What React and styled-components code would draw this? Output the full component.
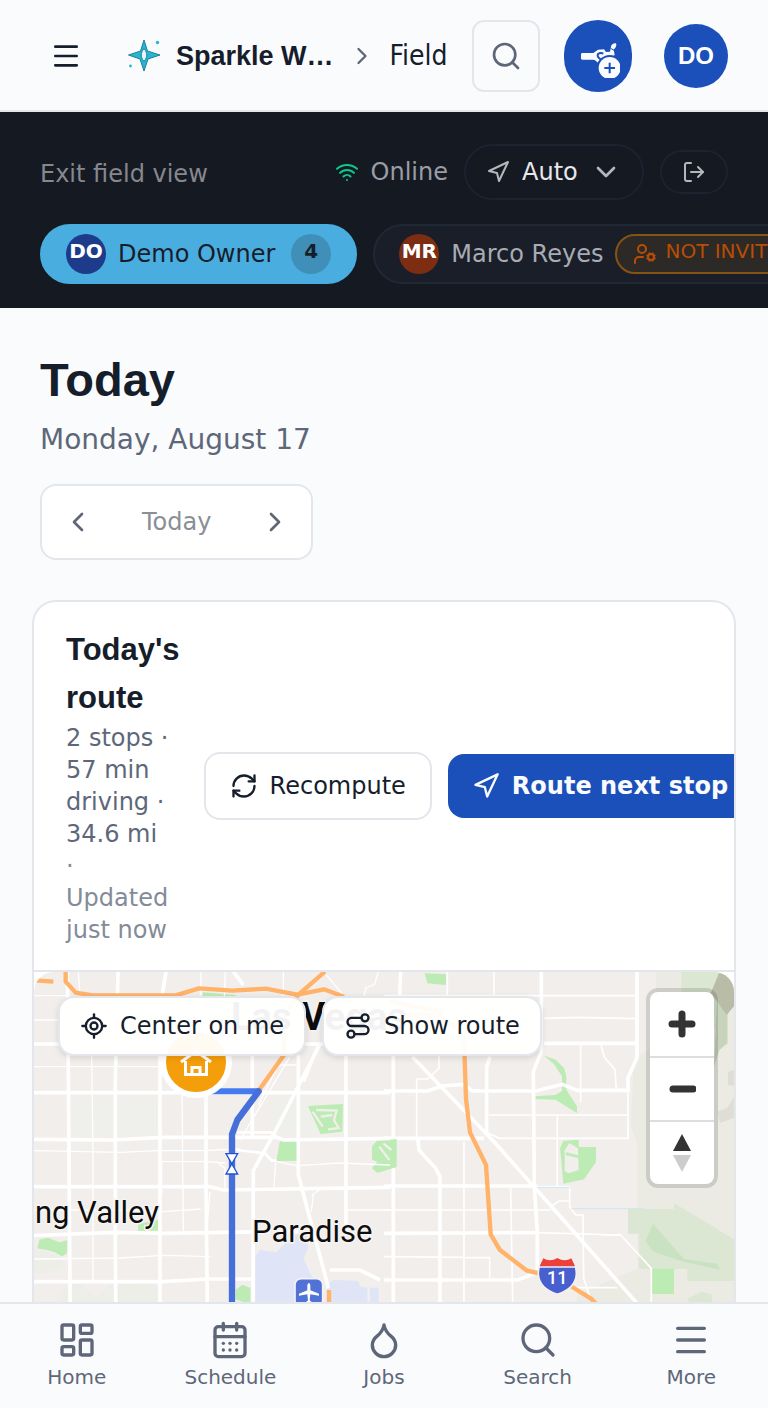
import styled, { ThemeProvider, createGlobalStyle } from "styled-components";
import {
  CalendarDays,
  ChevronDown,
  ChevronLeft,
  ChevronRight,
  Droplet,
  LayoutDashboard,
  LocateFixed,
  LogOut,
  Menu,
  Navigation,
  RefreshCw,
  Route,
  Search,
  UserCog,
  Wifi,
} from "lucide-react";

const theme = {
  colors: {
    page: "#fafbfd",
    card: "#ffffff",
    border: "#e3e6eb",
    text: "#161d2b",
    muted: "#5e6779",
    faint: "#848b98",
    blue: "#1b50ba",
    dark: "#151922",
  },
  fonts: {
    body: '"DejaVu Sans", sans-serif',
    heading: '"Liberation Sans", Arial, sans-serif',
    crumb: '"DejaVu Sans Condensed", "DejaVu Sans", sans-serif',
  },
};

const GlobalStyle = createGlobalStyle`
  * {
    box-sizing: border-box;
  }

  body {
    margin: 0;
    background: ${theme.colors.page};
    color: ${theme.colors.text};
    font-family: ${theme.fonts.body};
    font-size: 24px;
    line-height: 32px;
  }

  button,
  select {
    font: inherit;
    color: inherit;
    margin: 0;
    padding: 0;
    border: none;
    background: none;
    cursor: pointer;
  }

  h1,
  h2,
  p {
    margin: 0;
  }

  svg {
    display: block;
    flex: none;
  }
`;

const Shell = styled.div`
  display: flex;
  flex-direction: column;
  height: 100vh;
`;

const Header = styled.header`
  display: flex;
  align-items: center;
  gap: 24px;
  flex: none;
  height: 112px;
  padding: 2px 40px 0 32px;
  border-bottom: 2px solid ${(props) => props.theme.colors.border};
`;

const MenuButton = styled.button`
  display: flex;
  align-items: center;
  justify-content: center;
  flex: none;
  width: 68px;
  height: 72px;
`;

const Crumbs = styled.nav`
  display: flex;
  align-items: center;
  gap: 14px;
  flex: 1;
  min-width: 0;
  padding-left: 4px;
  overflow: hidden;
  white-space: nowrap;

  & > svg {
    color: ${(props) => props.theme.colors.muted};
  }
`;

const Brand = styled.a`
  display: flex;
  align-items: center;
  gap: 14px;
  flex: none;
  color: inherit;
  text-decoration: none;
  font-family: ${(props) => props.theme.fonts.heading};
  font-size: 27px;
  font-weight: 700;
`;

const CrumbCurrent = styled.span`
  font-family: ${(props) => props.theme.fonts.crumb};
  font-size: 28px;
`;

const SearchButton = styled.button`
  display: flex;
  align-items: center;
  justify-content: center;
  flex: none;
  width: 68px;
  height: 72px;
  border: 2px solid ${(props) => props.theme.colors.border};
  border-radius: 12px;
  color: ${(props) => props.theme.colors.muted};
`;

const AddJobButton = styled.button`
  display: flex;
  align-items: center;
  justify-content: center;
  flex: none;
  width: 68px;
  height: 72px;
  border-radius: 34px;
  background: ${(props) => props.theme.colors.blue};
`;

const AccountButton = styled.button`
  flex: none;
  width: 64px;
  height: 64px;
  margin-left: 8px;
  border-radius: 50%;
  background: ${(props) => props.theme.colors.blue};
  color: #fff;
  font-family: ${(props) => props.theme.fonts.heading};
  font-weight: 700;
`;

const FieldBar = styled.section`
  flex: none;
  padding: 32px 0 24px 40px;
  background: ${(props) => props.theme.colors.dark};
`;

const FieldTools = styled.div`
  display: flex;
  align-items: center;
  gap: 16px;
  margin-bottom: 24px;
  padding-right: 40px;
`;

const ExitButton = styled.button`
  margin-right: auto;
  padding-top: 4px;
  color: #86888e;
`;

const Status = styled.span`
  display: flex;
  align-items: center;
  gap: 12px;
  color: #9a9da5;

  & > svg {
    color: #0cc98b;
  }
`;

const ModeField = styled.label`
  display: flex;
  align-items: center;
  gap: 12px;
  height: 56px;
  padding: 0 20px;
  border: 2px solid #1c2230;
  border-radius: 28px;
  color: #b4b7be;
`;

const ModeSelect = styled.select`
  appearance: none;
  color: #e6e8ec;
`;

const LogOutButton = styled.button`
  display: flex;
  align-items: center;
  justify-content: center;
  width: 68px;
  height: 44px;
  border: 2px solid #1c2230;
  border-radius: 22px;
  color: #b4b7be;
`;

const ChipRow = styled.div`
  display: flex;
  gap: 16px;
  overflow: hidden;
`;

const Chip = styled.button`
  display: flex;
  align-items: center;
  gap: 12px;
  flex: none;
  height: 60px;
  padding: 0 24px;
  border: 2px solid ${(props) => (props.$active ? "#4aaddf" : "#212835")};
  border-radius: 30px;
  background: ${(props) => (props.$active ? "#4aaddf" : "#191e29")};
  color: ${(props) => (props.$active ? props.theme.colors.text : "#a9acb3")};
  white-space: nowrap;
`;

const ChipAvatar = styled.span`
  width: 40px;
  height: 40px;
  border-radius: 50%;
  background: ${(props) => props.$color};
  color: #fff;
  font-size: 20px;
  font-weight: 700;
  line-height: 34px;
  text-align: center;
`;

const ChipCount = styled.span`
  width: 40px;
  height: 40px;
  margin-left: 4px;
  border-radius: 50%;
  background: #408fb9;
  font-size: 20px;
  font-weight: 700;
  line-height: 34px;
  text-align: center;
`;

const InviteTag = styled.span`
  display: flex;
  align-items: center;
  gap: 8px;
  height: 40px;
  padding: 0 16px;
  border: 2px solid #855313;
  border-radius: 20px;
  background: #2d2926;
  color: #b94d04;
  font-size: 20px;

  & > span {
    height: 38px;
  }
`;

const Main = styled.main`
  flex: 1;
  min-height: 0;
  padding: 40px 32px;
  overflow-y: auto;
  scrollbar-width: none;
`;

const DayHeader = styled.div`
  padding: 0 8px;
`;

const PageTitle = styled.h1`
  font-family: ${(props) => props.theme.fonts.heading};
  font-size: 47px;
  line-height: 64px;
`;

const PageDate = styled.p`
  margin-bottom: 20px;
  padding-top: 4px;
  color: ${(props) => props.theme.colors.muted};
  font-size: 28px;
  line-height: 48px;
`;

const DayPicker = styled.div`
  display: inline-flex;
  align-items: center;
  height: 76px;
  margin-bottom: 40px;
  border: 2px solid ${(props) => props.theme.colors.border};
  border-radius: 16px;
  background: ${(props) => props.theme.colors.card};
  vertical-align: top;
`;

const DayStep = styled.button`
  display: flex;
  align-items: center;
  justify-content: center;
  width: 72px;
  height: 72px;
  color: ${(props) => props.theme.colors.muted};
`;

const DayCurrent = styled.button`
  padding: 0 28px;
  color: #8a8e95;
`;

const Card = styled.section`
  border: 2px solid ${(props) => props.theme.colors.border};
  border-radius: 24px;
  background: ${(props) => props.theme.colors.card};
  overflow: hidden;
`;

const CardHeader = styled.div`
  display: flex;
  align-items: center;
  gap: 24px;
  padding: 24px 32px;
  border-bottom: 2px solid ${(props) => props.theme.colors.border};
`;

const RouteSummary = styled.div`
  flex: 1;
  color: ${(props) => props.theme.colors.muted};
`;

const CardTitle = styled.h2`
  color: ${(props) => props.theme.colors.text};
  font-family: ${(props) => props.theme.fonts.heading};
  font-size: 31px;
  line-height: 48px;
`;

const Updated = styled.span`
  display: block;
  color: ${(props) => props.theme.colors.faint};
`;

const CardActions = styled.div`
  display: flex;
  align-items: center;
  gap: 16px;
  flex: none;
`;

const ActionButton = styled.button`
  display: flex;
  align-items: center;
  gap: 12px;
  height: ${(props) => (props.$primary ? "64px" : "68px")};
  padding: 0 24px;
  border: ${(props) =>
    props.$primary ? "none" : `2px solid ${props.theme.colors.border}`};
  border-radius: 16px;
  background: ${(props) =>
    props.$primary ? props.theme.colors.blue : props.theme.colors.card};
  color: ${(props) => (props.$primary ? "#fafbfd" : props.theme.colors.text)};
  font-weight: ${(props) => (props.$primary ? 700 : 400)};
  white-space: nowrap;
`;

const MapFrame = styled.div`
  position: relative;
  height: 560px;
  border-radius: 20px;
  overflow: hidden;
`;

const MapCanvas = styled.svg`
  width: 100%;
  height: 100%;
`;

const MapActions = styled.div`
  position: absolute;
  top: 24px;
  left: 24px;
  display: flex;
  gap: 16px;
`;

const MapButton = styled.button`
  display: flex;
  align-items: center;
  gap: 12px;
  height: 60px;
  padding: 0 20px;
  border: 2px solid ${(props) => props.theme.colors.border};
  border-radius: 16px;
  background: rgba(255, 255, 255, 0.95);
  box-shadow: 0 2px 6px rgba(0, 0, 0, 0.12);
  white-space: nowrap;
`;

const ZoomControls = styled.div`
  position: absolute;
  top: 20px;
  right: 20px;
  border-radius: 8px;
  background: #fff;
  box-shadow: 0 0 0 4px rgba(0, 0, 0, 0.13);
`;

const ZoomButton = styled.button`
  display: flex;
  align-items: center;
  justify-content: center;
  width: 64px;
  height: 64px;

  & + & {
    border-top: 2px solid #ddd;
  }
`;

const TabBar = styled.nav`
  display: grid;
  grid-template-columns: repeat(5, 1fr);
  flex: none;
  height: 106px;
  border-top: 2px solid ${(props) => props.theme.colors.border};
  background: ${(props) => props.theme.colors.page};
`;

const Tab = styled.a`
  display: flex;
  flex-direction: column;
  align-items: center;
  gap: 4px;
  padding-top: 16px;
  color: ${(props) => props.theme.colors.muted};
  font-size: 20px;
  line-height: 26px;
  text-decoration: none;
`;

const tabs = [
  { label: "Home", icon: LayoutDashboard },
  { label: "Schedule", icon: CalendarDays },
  { label: "Jobs", icon: Droplet },
  { label: "Search", icon: Search },
  { label: "More", icon: Menu },
];

const SparkleLogo = () => (
  <svg width="34" height="34" viewBox="0 0 34 34" aria-hidden="true">
    <path
      d="M16 1 19.500 12 32 16 20 20 16 32 12 20 0.500 16 12.500 12Z"
      fill="#26b5d3"
      stroke="#237f99"
      strokeWidth="1"
    />
    <path
      d="M16 9.500c2 2.500 2.800 4.500 2.800 6.500s-.8 4-2.800 6.500c-2-2.500-2.800-4.500-2.800-6.500s.8-4 2.800-6.500Z"
      fill="#e4f7fb"
      stroke="#237f99"
      strokeWidth="1"
    />
    <circle cx="29.500" cy="3.500" r="1.700" fill="#26b5d3" />
    <circle cx="2.500" cy="27" r="1.400" fill="#26b5d3" />
  </svg>
);

const SprayIcon = () => (
  <svg width="44" height="44" viewBox="0 0 132 132" aria-hidden="true">
    <g fill="#fafbfd">
      <rect x="15" y="57" width="44" height="20" rx="4" />
      <path d="M52 57 66 47 84 46 90 54 102 53 106 34Q112 26 120 28 124 34 118 42L113 46 116 64 80 76 68 88 56 78 52 76Z" />
    </g>
    <path d="M74 76Q62 68 66 60 74 54 82 59" fill="none" stroke="#1b50ba" strokeWidth="6" />
    <path d="M104 43 114 49" stroke="#1b50ba" strokeWidth="3" />
    <circle cx="101" cy="102" r="39" fill="#1b50ba" />
    <circle cx="101" cy="102" r="33" fill="#fafbfd" />
    <path d="M101 86v32M85 102h32" stroke="#1b50ba" strokeWidth="6" />
  </svg>
);

const WestMap = () => (
  <g transform="translate(30 965) scale(.33333)" fill="none">
    <g fill="#eceee7">
      <path d="M0 850 80 870 110 900 60 920 0 930Z" />
      <path d="M90 980 140 950 200 1000 240 960 370 950 420 1100 90 1100Z" />
      <path d="M130 400h250v110H130ZM720 400l110-10 60 110H720Z" fill="#efefec" />
    </g>
    <g fill="#dfe4f6">
      <path d="M676 875 690 855 740 862 770 830 800 808 832 815 835 850 820 880 838 920 850 940 880 1100 676 1100Z" />
      <path d="M890 960 910 945 985 948 990 965 1012 968v45h8v-45h26v42l-20 90H890Z" />
    </g>
    <g fill="#bcebb3">
      <path d="M518 82 617 90v8H518ZM834 423 885 420 939 417 937 500 872 507Z" />
      <path d="M750 527 801 530v57l-62 1ZM1026 545l14-17 60-6v84l-58 18-16-14 16-20-16-6Z" />
      <path d="M22 850 28 824l26-6 34 14 24-6-2 40-14 8-22-12-20-6ZM324 777l60-12v32h-60ZM617 975l20-16 24 10v50l-44-16Z" />
    </g>
    <path
      d="M848 440l30 45M858 435l62 2-8 28 14 24-32 4M872 455l35-5M1048 545l30 40M1060 535l24 20"
      stroke="#f1eeeb"
      strokeWidth="7"
    />
    <g stroke="#fff" strokeWidth="4">
      <path d="M0 92h120M12 165h100M0 305h600M12 557l260 5 110-5h130l120-5M396 590h130l60 4M12 735h270l120 5 110-8M12 882l260-3 130-8 140 4M740 590l60 12 130-8 150 6" />
      <path d="M145 20l5 70M185 270l4 300v375M455 270l5 530M586 20l-3 80M513 20v80M395 590v100M540 680l-10 120M737 592l-5 75M845 690l28-18M760 20v80M948 735h132M880 20l60 70M1045 20l-12 40-25 8-8 32M560 590l25 20v60M800 300h-55l-60 120M780 275l-150 250M850 690l-6 50" />
    </g>
    <g stroke="#fff" strokeWidth="11">
      <path d="M112 20l3 300 6 780M264 20l-8 330v500l2 250M408 20l-18 110v970M528 390v280l5 430M667 270v250M670 620l-1 480" />
      <path d="M0 237h1080M0 383h1080M0 523l250 2 150-8h340l20 8 320-5M0 665h540l40 10 500-8M0 812l260-10 140 3 320-5M0 950h400l130-8h140" />
      <path d="M948 270v530M805 270v360l40 150 40 150 10 40M870 237 730 510 668 620M900 915h90l60 30M610 20l30 40M745 800h60" />
      <path d="M822 350 865 240M622 502h100l28 20M620 555l85 10 20 22h15" strokeWidth="8" />
    </g>
    <g stroke="#ffb268" strokeWidth="13" strokeLinejoin="round">
      <path d="M15 46l55 4M107 20v30l30 33 50 8h250l70-21 100 7 100-6 95 18 80-16 60 22" />
      <path d="M885 20 806 88 762 150v120l-75 105M897 975v60" />
      <path d="M1080 110l160 30" />
    </g>
    <path d="M500 379h186" stroke="#467bf0" strokeWidth="18" />
    <path
      d="M686 379 622 465 606 508v592"
      stroke="#466fda"
      strokeWidth="19"
      strokeLinecap="round"
      strokeLinejoin="round"
    />
    <path d="M588 566h35l-35 61h35Z" fill="#fff" stroke="#2451d6" strokeWidth="4" />
    <rect x="795" y="941" width="83" height="83" rx="18" fill="#5073d5" stroke="#f3f1f4" strokeWidth="5" />
    <path
      d="M832 960q5-12 9 0v16l26 10v6l-26-4-2 18 8 7v4l-10-3-11 3v-4l8-7-2-18-25 4v-6l25-10Z"
      fill="#fff"
    />
  </g>
);

const EastMap = () => (
  <g transform="translate(384 965) scale(.33333)" fill="none">
    <path d="M815 20h240v1100H560l20-130 180-80V540l-20-60 10-200 70-40Z" fill="#ebebe4" />
    <g fill="#dbe7d3">
      <path d="M732 732h138v-18l185 112v122H910v-36H765V806h-33Z" />
      <path d="M892 20h120l20 60v160l-80-100-60-60ZM912 1000l40-20 30 8 5 30-70 10Z" />
    </g>
    <path d="M807 776 900 882l100 14 8 18-110-24-90-30-24-32Z" fill="#c9e3c2" />
    <path d="M1000 90 1030 70v165l-24 20-16 50Z" fill="#c7d3ba" />
    <path d="M980 85 1005 24 1053 30v90l-25 30-28-40Z" fill="#b9bda8" />
    <path d="M1032 320l22-6v50l-22-4ZM1000 440l30-12 24-40v70l-46 15Z" fill="#dfddd5" />
    <g fill="#bcebb3">
      <path d="M122 25 186 28v32l-56-5ZM480 272l35 12 25 25 7 25v40l32 50v20l-65-40-60-2v-8l60-4 20-12v-44l-25-38Z" />
      <path d="M528 550l10-22 46-4v22h52v45l-36 52-62 13-8-90ZM0 527l22-2v76L0 610ZM804 911h66v76h-66Z" />
    </g>
    <path d="M542 556l14-22 26 16 2 65-30 10-12-6Z" fill="#f1eeeb" />
    <path d="M546 566l40 10" stroke="#bcebb3" strokeWidth="8" />
    <g stroke="#fff" strokeWidth="5">
      <path d="M0 92h755M480 160l100-3 175 4M190 20v70M330 20v70M165 270v40l-35 32H98v190M315 450h415M732 340v180H345l-40-20M590 240v172M651 240l10 36 32 38 4 60M520 450v215" />
      <path d="M0 735h500M380 670l6 340M455 665h102v60l18 25h22l2 190 20 60M500 725l25-17h32M0 875l317 3v60M240 530v490M560 968h140M712 810h-60" />
    </g>
    <g stroke="#fff" strokeWidth="11">
      <path d="M0 378h130l45-15 65-5 25 20h190l80-20 45 18h157M0 520h300M0 663h460M0 805l460-2M0 945h400l60-22M480 235h278" />
      <path d="M759 20v258l-27 60v40M50 20l-3 70M28 270v840M102 520l3 35 50 55 13 25v475M472 20v240l-24 60 3 345 9 140v110M318 275l-10 30v205" />
      <path d="M85 275 330 530 600 835 755 1010 840 1100" />
      <path d="M460 803l250 7 92 100v190" strokeWidth="5" />
    </g>
    <path d="M460 667h97M562 731h218l16 14" stroke="#cbe6f2" strokeWidth="3" />
    <path
      d="M-30 150 160 150l60 40 20 30 6 182 12 100 48 98 14 208 27 46 80 62 40 10M555 960l65 40 60 60"
      stroke="#ffb268"
      strokeWidth="13"
      strokeLinejoin="round"
    />
    <path
      d="M478 880q20 12 42-1 22 13 42 1 16 22 15 48-2 42-57 60-55-18-57-60-1-26 15-48Z"
      fill="#485fd0"
      stroke="#f4f2f0"
      strokeWidth="5"
    />
    <path d="M478 880q20 12 42-1 22 13 42 1l11 24H467Z" fill="#ee4038" />
    <path d="M466 906h108" stroke="#f4f2f0" strokeWidth="4" />
    <text
      x="520"
      y="957"
      fill="#fff"
      fontFamily="Roboto, sans-serif"
      fontSize="54"
      fontWeight="500"
      textAnchor="middle"
    >
      11
    </text>
  </g>
);

const CityMap = () => (
  <MapCanvas
    viewBox="34 972 700 560"
    preserveAspectRatio="xMinYMin slice"
    role="img"
    aria-label="Route map"
  >
    <rect x="0" y="900" width="900" height="700" fill="#f1eeeb" />
    <EastMap />
    <WestMap />
    <g
      fill="#0d0d0d"
      stroke="#f6f4f2"
      strokeWidth="3"
      paintOrder="stroke"
      fontFamily="Roboto, sans-serif"
      fontSize="31"
    >
      <text x="159" y="1223" textAnchor="end">
        Spring Valley
      </text>
      <text x="252" y="1242">
        Paradise
      </text>
      <text x="231" y="1030" fontSize="38" fontWeight="700">
        Las Vegas
      </text>
    </g>
    <circle cx="196" cy="1062" r="33" fill="#f59e0b" stroke="#fff" strokeWidth="6" />
    <path
      d="M181 1062 196 1051 211 1062M185.500 1061v13.500h21V1061M192 1074v-6.500h8v6.500"
      fill="none"
      stroke="#fff"
      strokeWidth="3"
    />
  </MapCanvas>
);

const App = () => {
  return (
    <ThemeProvider theme={theme}>
      <GlobalStyle />
      <Shell>
        <Header>
          <MenuButton aria-label="Open menu">
            <Menu size={32} />
          </MenuButton>
          <Crumbs aria-label="Breadcrumb">
            <Brand href="#">
              <SparkleLogo />
              Sparkle W…
            </Brand>
            <ChevronRight size={28} />
            <CrumbCurrent>Field</CrumbCurrent>
          </Crumbs>
          <SearchButton aria-label="Search">
            <Search size={32} />
          </SearchButton>
          <AddJobButton aria-label="Add job">
            <SprayIcon />
          </AddJobButton>
          <AccountButton>DO</AccountButton>
        </Header>

        <FieldBar>
          <FieldTools>
            <ExitButton>Exit field view</ExitButton>
            <Status>
              <Wifi size={24} />
              Online
            </Status>
            <ModeField>
              <Navigation size={24} />
              <ModeSelect aria-label="Navigation app">
                <option>Auto</option>
              </ModeSelect>
              <ChevronDown size={32} />
            </ModeField>
            <LogOutButton aria-label="Log out">
              <LogOut size={24} />
            </LogOutButton>
          </FieldTools>
          <ChipRow>
            <Chip $active>
              <ChipAvatar $color="#1e3a8a">DO</ChipAvatar>
              Demo Owner
              <ChipCount>4</ChipCount>
            </Chip>
            <Chip>
              <ChipAvatar $color="#7c2d12">MR</ChipAvatar>
              Marco Reyes
              <InviteTag>
                <UserCog size={24} />
                <span>NOT INVITED</span>
              </InviteTag>
            </Chip>
          </ChipRow>
        </FieldBar>

        <Main>
          <DayHeader>
            <PageTitle>Today</PageTitle>
            <PageDate>Monday, August 17</PageDate>
            <DayPicker>
              <DayStep aria-label="Previous day">
                <ChevronLeft size={32} />
              </DayStep>
              <DayCurrent>Today</DayCurrent>
              <DayStep aria-label="Next day">
                <ChevronRight size={32} />
              </DayStep>
            </DayPicker>
          </DayHeader>

          <Card>
            <CardHeader>
              <RouteSummary>
                <CardTitle>Today's route</CardTitle>
                <p>
                  2 stops · 57 min driving · 34.6 mi
                  <Updated>
                    ·<br />
                    Updated just now
                  </Updated>
                </p>
              </RouteSummary>
              <CardActions>
                <ActionButton>
                  <RefreshCw size={28} />
                  Recompute
                </ActionButton>
                <ActionButton $primary>
                  <Navigation size={28} />
                  Route next stop
                </ActionButton>
              </CardActions>
            </CardHeader>
            <MapFrame>
              <CityMap />
              <MapActions>
                <MapButton>
                  <LocateFixed size={28} />
                  Center on me
                </MapButton>
                <MapButton>
                  <Route size={28} />
                  Show route
                </MapButton>
              </MapActions>
              <ZoomControls>
                <ZoomButton aria-label="Zoom in">
                  <svg width="28" height="28" viewBox="0 0 28 28">
                    <path d="M14 4v20M4 14h20" stroke="#333" strokeWidth="7" strokeLinecap="round" />
                  </svg>
                </ZoomButton>
                <ZoomButton aria-label="Zoom out">
                  <svg width="28" height="28" viewBox="0 0 28 28">
                    <path d="M5 14h20" stroke="#333" strokeWidth="7" strokeLinecap="round" />
                  </svg>
                </ZoomButton>
                <ZoomButton aria-label="Reset north">
                  <svg width="18" height="38" viewBox="0 0 18 38">
                    <path d="M9 0 18 17H0Z" fill="#333" />
                    <path d="M9 38 0 21h18Z" fill="#ccc" />
                  </svg>
                </ZoomButton>
              </ZoomControls>
            </MapFrame>
          </Card>
        </Main>

        <TabBar aria-label="Main">
          {tabs.map(({ label, icon: Icon }) => (
            <Tab key={label} href="#">
              <Icon size={40} />
              {label}
            </Tab>
          ))}
        </TabBar>
      </Shell>
    </ThemeProvider>
  );
};

export default App;
